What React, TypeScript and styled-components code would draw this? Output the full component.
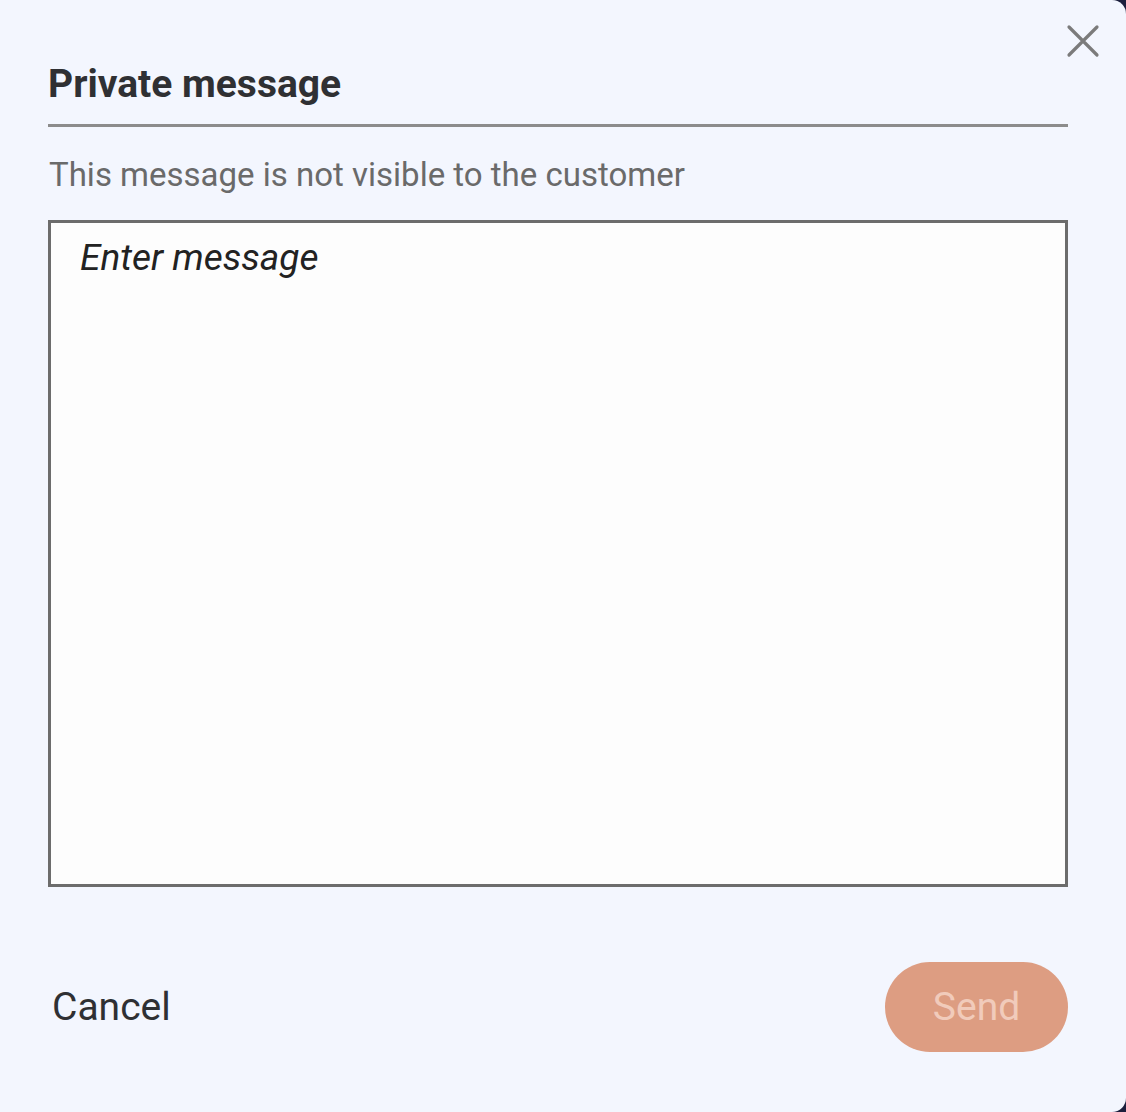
import React, { useState } from 'react';
import styled, { createGlobalStyle } from 'styled-components';

// --- Global ---
const GlobalStyle = createGlobalStyle`
  html, body {
    margin: 0;
    padding: 0;
    background: #1c1f3d;
  }
  * {
    box-sizing: border-box;
  }
`;

// --- Styled Components ---
const Dialog = styled.div`
  position: relative;
  width: 1126px;
  height: 1112px;
  background: #f3f6fe;
  border-radius: 0 14px 14px 0;
  padding: 61px 58px 60px 48px;
  display: flex;
  flex-direction: column;
  font-family: Roboto, 'Liberation Sans', sans-serif;
`;

const CloseButton = styled.button`
  position: absolute;
  top: 23px;
  right: 25px;
  width: 36px;
  height: 36px;
  padding: 0;
  border: none;
  background: transparent;
  cursor: pointer;
  display: flex;
  align-items: center;
  justify-content: center;
`;

const Title = styled.h2`
  margin: 0;
  font-size: 39px;
  font-weight: 700;
  color: #2f3033;
  padding-bottom: 17px;
  border-bottom: 3px solid #8c8c8c;
`;

const Subtitle = styled.p`
  margin: 28px 0 0 1px;
  font-size: 33px;
  color: #6a6a6a;
`;

const MessageBox = styled.textarea`
  margin-top: 26px;
  height: 667px;
  width: 100%;
  resize: none;
  border: 3px solid #6c6c6c;
  background: #fdfdfd;
  padding: 13px 29px;
  font-family: Roboto, 'Liberation Sans', sans-serif;
  font-size: 37px;
  color: #222;
  outline: none;

  &::placeholder {
    font-style: italic;
    color: #222;
  }
`;

const Footer = styled.div`
  margin-top: auto;
  display: flex;
  justify-content: space-between;
  align-items: center;
`;

const TextButton = styled.button`
  border: none;
  background: transparent;
  padding: 0 4px;
  font-family: Roboto, 'Liberation Sans', sans-serif;
  font-size: 39px;
  color: #2f3033;
  cursor: pointer;
`;

const PillButton = styled.button<{ $disabled?: boolean }>`
  width: 183px;
  height: 90px;
  border: none;
  border-radius: 45px;
  background: #dd9d82;
  color: ${(p) => (p.$disabled ? '#f1cbbb' : '#ffffff')};
  font-family: Roboto, 'Liberation Sans', sans-serif;
  font-size: 39px;
  cursor: ${(p) => (p.$disabled ? 'default' : 'pointer')};
`;

// --- Main Component ---
const App = () => {
  const [message, setMessage] = useState('');

  return (
    <>
      <GlobalStyle />
      <Dialog>
        <CloseButton aria-label="Close">
          <svg width="34" height="34" viewBox="0 0 34 34">
            <path
              d="M3 3 L31 31 M31 3 L3 31"
              stroke="#7b7b7b"
              strokeWidth="3.2"
              strokeLinecap="round"
            />
          </svg>
        </CloseButton>
        <Title>Private message</Title>
        <Subtitle>This message is not visible to the customer</Subtitle>
        <MessageBox
          placeholder="Enter message"
          value={message}
          onChange={(e) => setMessage(e.target.value)}
        />
        <Footer>
          <TextButton>Cancel</TextButton>
          <PillButton $disabled={!message}>Send</PillButton>
        </Footer>
      </Dialog>
    </>
  );
};

export default App;
